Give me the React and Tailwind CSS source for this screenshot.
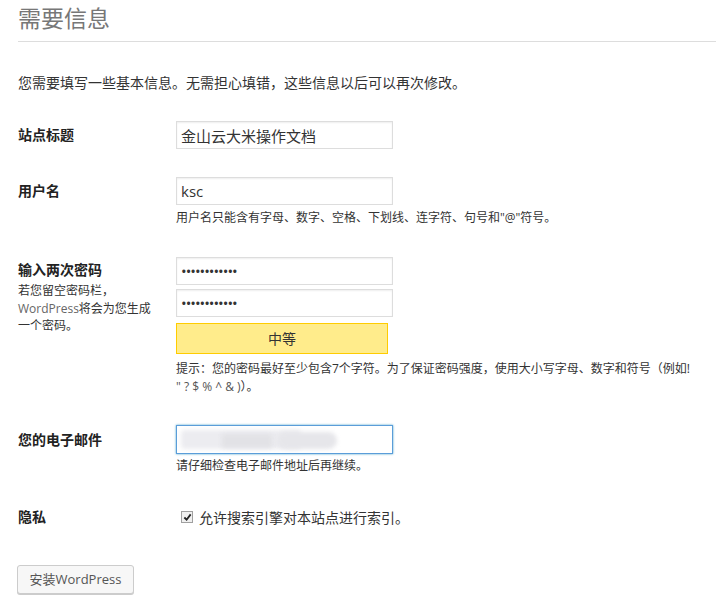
import { useState } from 'react';

const font = { fontFamily: '"Open Sans", "Noto Sans CJK SC", sans-serif' };

const inputCls =
  'block w-[217px] h-[28px] border border-[#dddddd] bg-white px-[4px] text-[15px] text-[#333] shadow-[inset_0_1px_2px_rgba(0,0,0,0.07)] outline-none';

function Label({ children, className = '' }) {
  return (
    <div className={`w-[158px] shrink-0 text-[14px] font-bold text-[#222] ${className}`}>
      {children}
    </div>
  );
}

export default function App() {
  const [title, setTitle] = useState('金山云大米操作文档');
  const [user, setUser] = useState('ksc');
  const [pw1, setPw1] = useState('aaaaaaaaaaaa');
  const [pw2, setPw2] = useState('aaaaaaaaaaaa');
  const [indexing, setIndexing] = useState(true);

  return (
    <div className="min-h-[609px] bg-white pl-[18px] pr-[5px] text-[#333]" style={font}>
      <h1 className="text-[23px] font-normal leading-[36px] text-[#777] pb-[5px] border-b border-[#dddddd]">
        需要信息
      </h1>
      <p className="mt-[31px] text-[14px] leading-[20px] text-[#333]">
        您需要填写一些基本信息。无需担心填错，这些信息以后可以再次修改。
      </p>

      {/* site title */}
      <div className="flex mt-[28px]">
        <Label className="leading-[28px]">站点标题</Label>
        <input className={inputCls} value={title} onChange={(e) => setTitle(e.target.value)} />
      </div>

      {/* username */}
      <div className="flex mt-[28px]">
        <Label className="leading-[28px]">用户名</Label>
        <div>
          <input className={inputCls} value={user} onChange={(e) => setUser(e.target.value)} />
          <p className="mt-[4px] text-[12px] leading-[17px] text-[#333]">
            用户名只能含有字母、数字、空格、下划线、连字符、句号和"@"符号。
          </p>
        </div>
      </div>

      {/* passwords */}
      <div className="flex mt-[31px]">
        <div className="w-[158px] shrink-0">
          <div className="pt-[1px] text-[14px] font-bold leading-[24px] text-[#222]">输入两次密码</div>
          <p className="text-[12px] leading-[17.5px] text-[#333]">
            若您留空密码栏，
            <br />
            <span className="text-[#666]">WordPress</span>将会为您生成
            <br />
            一个密码。
          </p>
        </div>
        <div>
          <input
            type="password"
            className={`${inputCls} text-[12px] tracking-[-1px]`}
            value={pw1}
            onChange={(e) => setPw1(e.target.value)}
          />
          <input
            type="password"
            className={`${inputCls} mt-[4px] text-[12px] tracking-[-1px]`}
            value={pw2}
            onChange={(e) => setPw2(e.target.value)}
          />
          <div className="mt-[6px] w-[212px] h-[31px] border border-[#ffcc00] bg-[#ffec8b] text-center text-[14px] leading-[29px] text-[#333]">
            中等
          </div>
          <p className="mt-[6px] whitespace-nowrap text-[12px] leading-[18px] text-[#333]">
            提示：您的密码最好至少包含7个字符。为了保证密码强度，使用大小写字母、数字和符号（例如!
            <br />
            <span className="text-[#555]">" ? $ % ^ &amp; )</span>）。
          </p>
        </div>
      </div>

      {/* email */}
      <div className="flex mt-[29px]">
        <Label className="leading-[29px]">您的电子邮件</Label>
        <div>
          <div className="relative w-[217px] h-[29px] border border-[#5b9dd9] bg-white shadow-[0_0_2px_rgba(30,140,190,0.8)] overflow-hidden">
            <div className="absolute left-[4px] top-[4px] h-[19px] w-[120px] rounded-[4px] bg-[#ececf0] blur-[2px]" />
            <div className="absolute left-[45px] top-[8px] h-[14px] w-[50px] bg-[#e2e2e6] blur-[2px]" />
            <div className="absolute left-[100px] top-[6px] h-[17px] w-[60px] rounded-full bg-[#e6e6ea] blur-[2px]" />
          </div>
          <p className="mt-[3px] text-[12px] leading-[17px] text-[#333]">请仔细检查电子邮件地址后再继续。</p>
        </div>
      </div>

      {/* privacy */}
      <div className="flex mt-[29px]">
        <Label className="leading-[28px]">隐私</Label>
        <label className="flex items-center h-[28px] pl-[5px] text-[14px] text-[#333] cursor-pointer">
          <input
            type="checkbox"
            className="sr-only"
            checked={indexing}
            onChange={(e) => setIndexing(e.target.checked)}
          />
          <span className="flex items-center justify-center w-[12px] h-[12px] border border-[#a0a0a0] bg-[#f0f0f0]">
            {indexing && (
              <svg viewBox="0 0 10 10" className="w-[9px] h-[9px]">
                <path d="M1.5 5 L4 7.5 L8.5 1.5" fill="none" stroke="#222" strokeWidth="2" />
              </svg>
            )}
          </span>
          <span className="ml-[6px]">允许搜索引擎对本站点进行索引。</span>
        </label>
      </div>

      <button className="mt-[34px] -ml-[1px] block w-[117px] h-[29px] rounded-[3px] border border-[#cccccc] bg-[#f7f7f7] text-[13px] text-[#555] shadow-[0_1px_0_#cccccc]">
        安装WordPress
      </button>
    </div>
  );
}
